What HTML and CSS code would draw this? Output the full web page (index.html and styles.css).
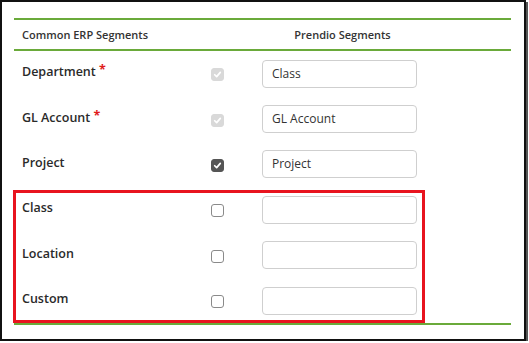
FILE: index.html
```html
<!DOCTYPE html>
<html lang="en">

<head>
    <meta charset="UTF-8">
    <meta name="viewport" content="width=device-width, initial-scale=1.0">
    <title>ERP Segments</title>
    <link rel="stylesheet" href="styles.css">
</head>

<body>
    <div class="frame">
        <div class="segments">
            <div class="seg-head">
                <div class="head-cell">Common ERP Segments</div>
                <div class="head-cell center">Prendio Segments</div>
            </div>

            <div class="seg-row">
                <div class="seg-label">Department <span class="req">*</span></div>
                <div class="seg-check"><span class="box disabled"><svg viewBox="0 0 13 13"><path d="M3.2 6.8 L5.5 9 L9.8 4" /></svg></span></div>
                <div class="seg-input"><div class="field">Class</div></div>
            </div>
            <div class="seg-row">
                <div class="seg-label">GL Account <span class="req">*</span></div>
                <div class="seg-check"><span class="box disabled"><svg viewBox="0 0 13 13"><path d="M3.2 6.8 L5.5 9 L9.8 4" /></svg></span></div>
                <div class="seg-input"><div class="field">GL Account</div></div>
            </div>
            <div class="seg-row">
                <div class="seg-label">Project</div>
                <div class="seg-check"><span class="box checked"><svg viewBox="0 0 13 13"><path d="M3.2 6.8 L5.5 9 L9.8 4" /></svg></span></div>
                <div class="seg-input"><div class="field">Project</div></div>
            </div>

            <div class="seg-group">
                <div class="seg-row">
                    <div class="seg-label">Class</div>
                    <div class="seg-check"><span class="box"></span></div>
                    <div class="seg-input"><div class="field"></div></div>
                </div>
                <div class="seg-row">
                    <div class="seg-label">Location</div>
                    <div class="seg-check"><span class="box"></span></div>
                    <div class="seg-input"><div class="field"></div></div>
                </div>
                <div class="seg-row">
                    <div class="seg-label">Custom</div>
                    <div class="seg-check"><span class="box"></span></div>
                    <div class="seg-input"><div class="field"></div></div>
                </div>
                <!-- annotation box -->
                <div class="highlight"></div>
            </div>
        </div>
    </div>
</body>

</html>
```

FILE: styles.css
```css
* {
    box-sizing: border-box;
    margin: 0;
    padding: 0;
    color: #333;
    font-family: 'Open Sans', sans-serif;
}

body {
    background: #fff;
}

.frame {
    width: 526px;
    height: 341px;
    border: 2px solid #111;
    box-shadow: 2px 2px 0 #555;
    padding: 16px 13px 0 12px;
}

.segments {
    border-top: 2px solid #6aaa3a;
    border-bottom: 2px solid #6aaa3a;
}

.seg-head {
    display: grid;
    grid-template-columns: 160px 1fr;
    height: 31px;
    align-items: center;
    border-bottom: 2px solid #6aaa3a;
}

.head-cell {
    font-size: 11px;
    font-weight: 600;
    padding-left: 8px;
}

.head-cell.center {
    text-align: center;
    padding-left: 0;
}

.seg-row {
    display: flex;
    align-items: center;
    height: 45.4px;
}

.seg-label {
    width: 190px;
    padding-left: 8px;
    font-size: 12.5px;
    font-weight: 600;
    color: #2a2a2a;
    margin-top: -4px;
}

.req {
    color: #e01b1b;
    font-weight: 700;
    position: relative;
    top: -2px;
}

.seg-check {
    width: 58px;
    padding-left: 7px;
    display: flex;
    align-items: center;
    margin-top: 2px;
}

.box {
    width: 13px;
    height: 13px;
    border: 1px solid #8a8a8a;
    border-radius: 3px;
    background: #fff;
    display: flex;
}

.box svg {
    width: 100%;
    height: 100%;
}

.box path {
    fill: none;
    stroke: #fff;
    stroke-width: 2;
    stroke-linecap: round;
    stroke-linejoin: round;
}

.box.disabled {
    background: #d9d9d9;
    border-color: #d9d9d9;
}

.box.checked {
    background: #555;
    border-color: #555;
}

.seg-input {
    flex: 1;
}

.field {
    width: 155px;
    height: 28px;
    border: 1px solid #cfcfcf;
    border-radius: 4px;
    padding-left: 9px;
    font-size: 12px;
    line-height: 26px;
}

.seg-group {
    position: relative;
}

.highlight {
    position: absolute;
    left: -1px;
    top: 3px;
    width: 412px;
    height: 133px;
    border: 3px solid #e8141f;
}
```
